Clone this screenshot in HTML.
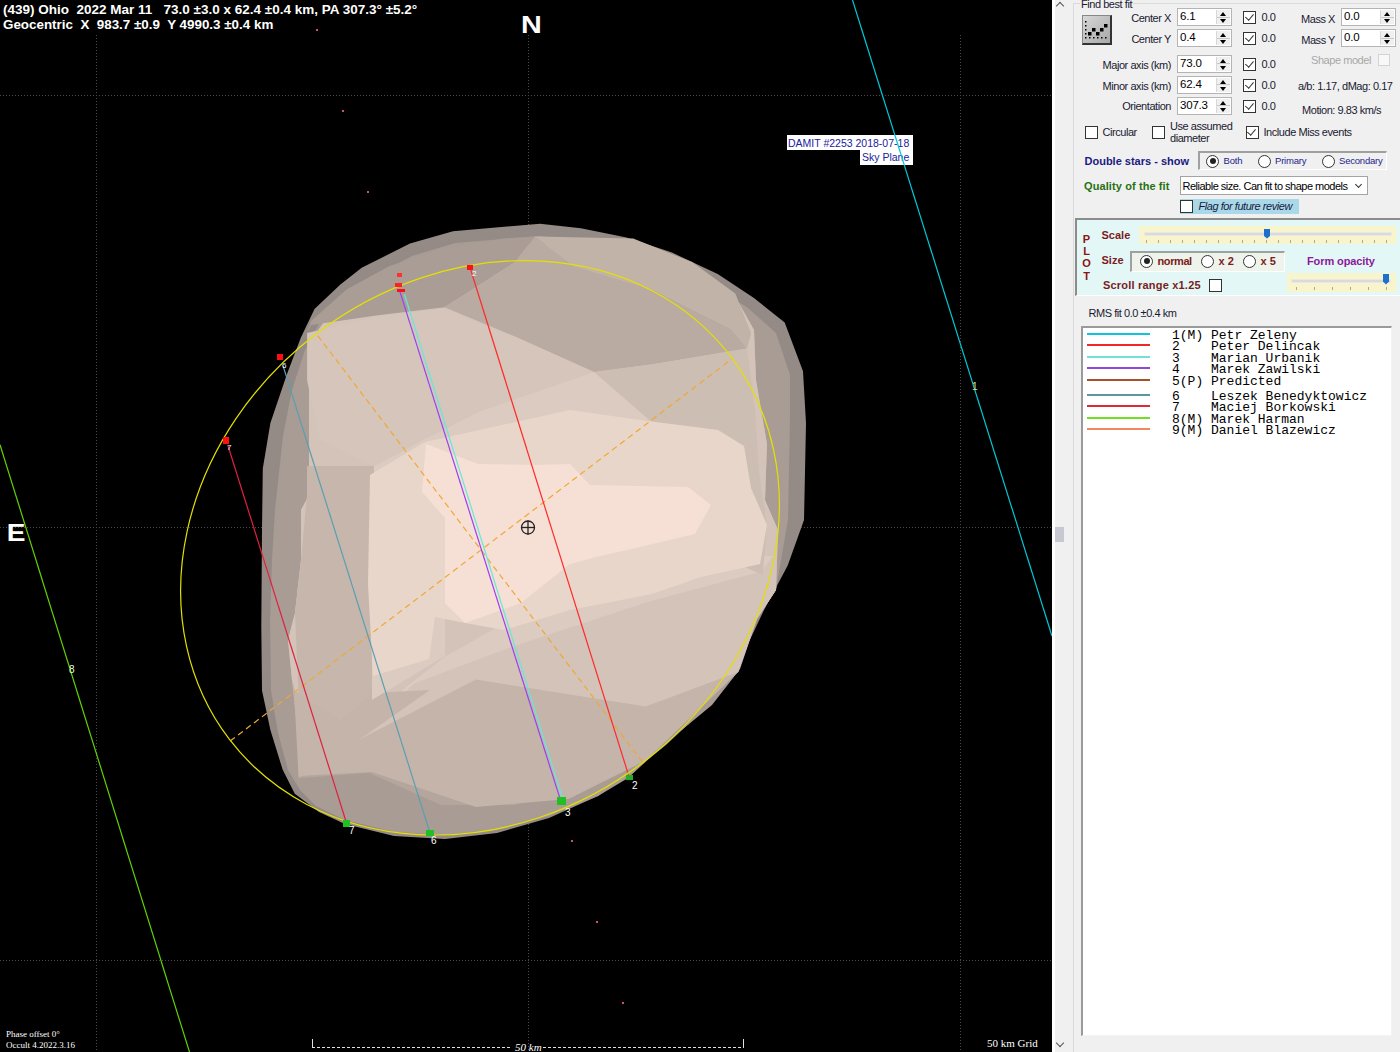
<!DOCTYPE html>
<html><head><meta charset="utf-8">
<style>
html,body{margin:0;padding:0;width:1400px;height:1052px;overflow:hidden;background:#f0f0f0;font-family:"Liberation Sans",sans-serif;}
#plot{position:absolute;left:0;top:0;width:1052px;height:1052px;background:#000;}
#strip{position:absolute;left:1052px;top:0;width:3px;height:1052px;background:#fff;}
#panel{position:absolute;left:1055px;top:0;width:345px;height:1052px;background:#f0f0f0;font-size:11px;color:#000;}
.a{position:absolute;white-space:nowrap;}
.t{position:absolute;white-space:pre;font-size:11px;letter-spacing:-0.45px;color:#000;line-height:12px;}
.r{text-align:right;}
.inp{position:absolute;width:53px;height:16px;border:1px solid #b4b4b4;background:#fff;}
.inp span{position:absolute;left:2px;top:0px;font-size:11.5px;letter-spacing:-0.2px;line-height:14px;color:#000;}
.spin{position:absolute;right:1px;top:1px;width:13px;height:14px;background:#f0f0f0;border-left:1px solid #d8d8d8;}
.spin:before{content:"";position:absolute;left:3px;top:2px;border-left:3.5px solid transparent;border-right:3.5px solid transparent;border-bottom:4px solid #000;}
.spin:after{content:"";position:absolute;left:3px;top:9px;border-left:3.5px solid transparent;border-right:3.5px solid transparent;border-top:4px solid #000;}
.spin i{position:absolute;left:0;top:6.5px;width:13px;height:1px;background:#c8c8c8;}
.cb{position:absolute;width:11px;height:11px;border:1px solid #333;background:#fff;}
.cb.k:after{content:"";position:absolute;left:2.5px;top:0px;width:3.5px;height:7px;border-right:1.3px solid #333;border-bottom:1.3px solid #333;transform:rotate(40deg);}
.rd{position:absolute;width:11px;height:11px;border:1px solid #333;border-radius:50%;background:#fff;}
.rd.k:after{content:"";position:absolute;left:2.5px;top:2.5px;width:6px;height:6px;border-radius:50%;background:#222;}
.sunk{position:absolute;border-top:2px solid #a0a0a0;border-left:2px solid #a0a0a0;border-right:1px solid #fff;border-bottom:1px solid #fff;}
.lg{position:absolute;left:1087px;width:63px;height:2px;}
.lt{position:absolute;left:1172px;font-family:"Liberation Mono",monospace;font-size:13px;line-height:13px;white-space:pre;color:#000;}

</style></head><body>
<svg id="plot" width="1052" height="1052" viewBox="0 0 1052 1052">
<rect width="1052" height="1052" fill="#000"/>
<g id="grid" stroke="#4a4a4a" stroke-width="1" stroke-dasharray="1 2">
<line x1="96.5" y1="35" x2="96.5" y2="1052"/>
<line x1="528.5" y1="35" x2="528.5" y2="1052"/>
<line x1="960.5" y1="35" x2="960.5" y2="1052"/>
<line x1="0" y1="95.5" x2="1052" y2="95.5"/>
<line x1="0" y1="527.5" x2="1052" y2="527.5"/>
<line x1="0" y1="960.5" x2="1052" y2="960.5"/>
</g>
<g id="shape">
<polygon fill="#958b86" points="262,530 262.8,468.6 270.4,423 287,374 300.8,337.8 314.5,308.9 340.4,284.5 361.7,267.8 410,243.5 453,231.3 540,223.7 580.8,228.3 626.5,237.4 672,252.6 717.7,273.9 754.3,298.2 784.7,322.6 803,371.2 806,423 804,520 787.7,565.6 763.4,611.3 739,663 714.7,699.5 666,745 635.6,769.5 598,796 549,818 497,833 445,839 394,836 345,824 319,812 294.8,793.8 282.6,769.5 270.4,730 262,690.4 261.3,626.5"/>
<polygon fill="#a89c95" points="272,560 275,510 283,436 292,390 305,350 320,322 345,297 366,280 412,256 455,243 540,236 580,240 624,249 670,265 712,285 748,308 776,333 790,375 790,420 788,519 776,590 757,619 740,669 712,705 666,743 628,778 598,796 549,816 497,830 445,835 394,832 345,820 316,806 300,790 288,770 278,733 271,690 270,620"/>
<polygon fill="#b4a69d" points="301,560 295,613 288,640 292,680 299,746 300,778 369,773 441,805 515,805 559,792 629,768 666,733 725,681 757,619 776,590 778,530 765,500 767,444 756,380 754,330 740,305 700,282 650,256 580,246 540,244 460,250 410,263 365,288 330,313 315,335 309,380 309,495 301,510"/>
<polygon fill="#c4b4a9" points="298.6,776.0 371.9,772.1 476.0,806.9 568.6,799.1 645.7,760.6 738.3,671.9 757,619 776,590 778,530 765,500 767,444 756,380 754,330 740,305 700,282 650,256 580,246 540,244 460,250 410,263 365,288 330,313 315,335 309,380 309,495 301,510 301,560 295,613 288,640 292,680 299,746"/>
<polygon fill="#d3c3b8" points="298.6,745.1 348.7,745.1 476.0,679.6 645.7,706.6 738.3,671.9 757,619 776,590 778,530 765,500 767,444 756,380 754,330 740,305 700,282 650,256 580,246 540,244 460,250 410,263 365,288 330,313 315,335 309,380 309,495 301,510 301,560 295,613 288,640 292,680 298,700"/>
<polygon fill="#dccbc0" points="348.7,745.1 371.9,714.3 445.1,656.4 506.9,621.7 645.7,583.1 761.4,556.1 773.0,556.1 761.4,571.6 645.7,602.4 506.9,648.7 414.3,683.4"/>
<polygon fill="#aa9d96" points="307.1,332.9 311.1,321.1 346.4,289.6 389.6,266.1 444.6,248.4 503.6,238.6 535.0,236.6 515.4,262.1 444.6,307.3 377.9,315.2 311.1,325.0"/>
<polygon fill="#b9aba2" points="444.6,307.3 515.4,262.1 535.0,236.6 574.3,266.1 652.9,289.6 731.4,328.9 747.1,348.6 652.9,364.3 593.9,372.1 515.4,336.8"/>
<polygon fill="#c2b3a9" points="535.0,236.6 633.2,238.6 692.1,262.1 735.3,293.6 751.1,332.9 747.1,348.6 731.4,328.9 652.9,289.6 574.3,266.1"/>
<polygon fill="#d5c5ba" points="307.1,332.9 377.9,316.4 444.6,308.5 515.4,336.8 593.9,372.1 480.0,411.4 425.0,438.9 373.9,466.4 318.9,438.9 307.1,380.0"/>
<polygon fill="#cdbeb3" points="593.9,372.1 652.9,364.3 747.1,348.6 755.0,411.4 758.9,470.4 766.8,525.4 762.8,574.9 703.9,548.9 652.9,423.2"/>
<polygon fill="#c6b6ac" points="307,466 374,466 372,693 340,720 300,730 295,613 301,560 307,495"/>
<polygon fill="#c4b4a9" points="294,690 340,720 372,693 430,690 348.7,747 298.6,778"/>
<polygon fill="#dccbc0" points="373.9,466.4 425.0,438.9 480.0,411.4 593.9,372.1 652.9,423.2 703.9,490.0 593.9,490.0 574.3,466.4 480.0,454.6 425.0,442.9 373.9,482.1"/>
<polygon fill="#dccbc0" points="372,560 445,560 445,656 400,683 372,700"/>
<polygon fill="#e9d6cb" points="370,475 425,442 570,410 640,420 718,430 744,446 751,488 767,525 760,564 701,577 652,594 570,610 504,630 465,623 435,617 429,659 373,676 368,584"/>
<polygon fill="#f6dfd5" points="426,444 478,464 537,465 570,464 590,485 688,487 711,505 695,534 636,548 596,557 570,564 537,590 521,603 465,623 445,603 445,518 422,492"/>
</g>
<g id="damit">
<rect x="787" y="135" width="126" height="15" fill="#fff"/>
<rect x="860" y="150" width="53" height="15" fill="#fff"/>
<text x="788" y="147" font-family="Liberation Sans" font-size="10.5" fill="#2020a0">DAMIT #2253 2018-07-18</text>
<text x="862" y="161" font-family="Liberation Sans" font-size="10.5" fill="#2020a0">Sky Plane</text>
</g>
<g id="lines" fill="none" stroke-width="1.2">
<line x1="852.5" y1="0" x2="1052" y2="636" stroke="#00c8d8"/>
<line x1="0" y1="444.7" x2="189.5" y2="1052" stroke="#60d400"/>
<line x1="230.1" y1="741.1" x2="731.9" y2="358.9" stroke="#f0a830" stroke-dasharray="6 4"/>
<line x1="317.7" y1="335.6" x2="644.3" y2="764.4" stroke="#f0a830" stroke-dasharray="6 4"/>
<line x1="470.8" y1="270" x2="629.6" y2="778.5" stroke="#ff2a2a"/>
<line x1="404.4" y1="294.3" x2="562.8" y2="799.3" stroke="#66e8d8"/>
<line x1="399.3" y1="289.6" x2="561.2" y2="802.4" stroke="#9a40f0"/>
<line x1="283.1" y1="366" x2="430" y2="833" stroke="#5aa0b0"/>
<line x1="228" y1="445.7" x2="346.5" y2="823" stroke="#e02040"/>
</g>
<ellipse cx="480" cy="547.8" rx="315.4" ry="269.5" transform="rotate(-37.3 480 547.8)" fill="none" stroke="#e4e000" stroke-width="1.2"/>
<g id="markers">
<rect x="467" y="265" width="6" height="5" fill="#ff1010"/>
<rect x="395" y="283" width="7" height="4" fill="#ff2020"/>
<rect x="397" y="273" width="5" height="4" fill="#ff3030"/>
<rect x="397" y="289" width="8" height="3" fill="#ff1010"/>
<rect x="277" y="354" width="6" height="6" fill="#ff1010"/>
<rect x="223" y="437" width="6" height="7" fill="#ff1010"/>
<rect x="626" y="775" width="7" height="5" fill="#20b020"/>
<rect x="557" y="797" width="9" height="8" fill="#20c020"/>
<rect x="343" y="820" width="7" height="7" fill="#20c020"/>
<rect x="426" y="830" width="8" height="6" fill="#20c020"/>
</g>
<g id="stars" fill="#d04890">
<rect x="316" y="29" width="2" height="2"/>
<rect x="342" y="110" width="2" height="2"/>
<rect x="367" y="191" width="2" height="2"/>
<rect x="571" y="840" width="2" height="2"/>
<rect x="596" y="921" width="2" height="2"/>
<rect x="622" y="1002" width="2" height="2"/>
</g>
<g id="cross" stroke="#222" stroke-width="1.3" fill="none">
<circle cx="528" cy="527.5" r="6.5"/>
<line x1="521" y1="527.5" x2="535" y2="527.5"/>
<line x1="528" y1="520.5" x2="528" y2="534.5"/>
</g>
<g font-family="Liberation Sans" fill="#fff" style="white-space:pre">
<text x="3" y="13.5" font-size="13.5" font-weight="bold" xml:space="preserve">(439) Ohio  2022 Mar 11   73.0 ±3.0 x 62.4 ±0.4 km, PA 307.3° ±5.2°</text>
<text x="3" y="29" font-size="13.4" font-weight="bold" xml:space="preserve">Geocentric  X  983.7 ±0.9  Y 4990.3 ±0.4 km</text>
<text transform="translate(521 32.5) scale(1.25 1)" x="0" y="0" font-size="23" font-weight="bold">N</text>
<text transform="translate(6.7 541) scale(1.22 1)" x="0" y="0" font-size="23" font-weight="bold">E</text>
<text x="632" y="789" font-size="10">2</text>
<text x="565" y="816" font-size="10">3</text>
<text x="431" y="844" font-size="10">6</text>
<text x="349" y="834" font-size="10">7</text>
<text x="472" y="276" font-size="8">2</text>
<text x="282" y="368" font-size="8">6</text>
<text x="227" y="450" font-size="8">7</text>
<text x="972" y="390" font-size="10" fill="#e8e080">1</text>
<text x="69" y="673" font-size="10" fill="#e0ffd0">8</text>
</g>
<g font-family="Liberation Serif" fill="#fff" font-size="9">
<text x="6" y="1037">Phase offset 0°</text>
<text x="6" y="1048">Occult 4.2022.3.16</text>
<text x="987" y="1047" font-size="11">50 km Grid</text>
<text x="515" y="1051" font-style="italic" font-size="11">50 km</text>
</g>
<g stroke="#e0e0e0" fill="none" stroke-width="1">
<path d="M312.5 1039 V1047.5"/><path d="M743.5 1039 V1047.5"/>
<path d="M312 1047.5 H512 M543 1047.5 H744" stroke-dasharray="3 2"/>
</g>
</svg>
<div id="strip"></div>
<div id="panel"></div>
<div style="position:absolute;left:1073px;top:3px;width:1px;height:1049px;background:#dadada"></div>
<div style="position:absolute;left:1073px;top:3px;width:327px;height:1px;background:#dadada"></div>
<div style="position:absolute;left:1057px;top:3px;width:5px;height:5px;border-left:1.5px solid #555;border-top:1.5px solid #555;transform:rotate(45deg);"></div>
<div style="position:absolute;left:1057px;top:1040px;width:5px;height:5px;border-right:1.5px solid #555;border-bottom:1.5px solid #555;transform:rotate(45deg);"></div>
<div style="position:absolute;left:1055px;top:527px;width:9px;height:15px;background:#c8c8d2"></div>
<div class="t" style="left:1080px;top:-2.5px;background:#f0f0f0;padding:0 1px;color:#1a1a30">Find best fit</div>
<div style="position:absolute;left:1082px;top:15px;width:27px;height:27px;border:1px solid #888;border-right:2px solid #333;border-bottom:2px solid #333;background:linear-gradient(135deg,#d8d8d8,#a8a8a8);"></div>
<svg style="position:absolute;left:1082px;top:15px" width="30" height="30" fill="#000">
<g><rect x="3" y="6" width="1.5" height="1.5"/><rect x="3" y="10" width="1.5" height="1.5"/><rect x="3" y="14" width="1.5" height="1.5"/><rect x="3" y="18" width="1.5" height="1.5"/><rect x="3" y="22" width="1.5" height="1.5"/>
<rect x="7" y="22" width="1.5" height="1.5"/><rect x="11" y="22" width="1.5" height="1.5"/><rect x="15" y="22" width="1.5" height="1.5"/><rect x="19" y="22" width="1.5" height="1.5"/><rect x="23" y="22" width="1.5" height="1.5"/>
<rect x="6" y="17" width="3.5" height="3.5"/><rect x="10" y="13" width="3.5" height="3.5"/><rect x="14" y="17" width="3.5" height="3.5"/><rect x="18" y="13" width="3.5" height="3.5"/><rect x="22" y="9" width="3.5" height="3.5"/></g>
</svg>
<div class="t r" style="left:1100px;width:71px;top:12px;color:#1a1a30">Center X</div>
<div class="t r" style="left:1100px;width:71px;top:33px;color:#1a1a30">Center Y</div>
<div class="t r" style="left:1090px;width:81px;top:58.5px;color:#1a1a30">Major axis (km)</div>
<div class="t r" style="left:1090px;width:81px;top:79.5px;color:#1a1a30">Minor axis (km)</div>
<div class="t r" style="left:1090px;width:81px;top:100px;color:#1a1a30">Orientation</div>
<div class="inp" style="left:1177px;top:8px"><span>6.1</span><div class="spin"><i></i></div></div>
<div class="inp" style="left:1177px;top:29px"><span>0.4</span><div class="spin"><i></i></div></div>
<div class="inp" style="left:1177px;top:54.5px"><span>73.0</span><div class="spin"><i></i></div></div>
<div class="inp" style="left:1177px;top:75.5px"><span>62.4</span><div class="spin"><i></i></div></div>
<div class="inp" style="left:1177px;top:96.5px"><span>307.3</span><div class="spin"><i></i></div></div>
<div class="cb k" style="left:1243px;top:10.5px"></div>
<div class="cb k" style="left:1243px;top:31.5px"></div>
<div class="cb k" style="left:1243px;top:57.5px"></div>
<div class="cb k" style="left:1243px;top:78.5px"></div>
<div class="cb k" style="left:1243px;top:99.5px"></div>
<div class="t" style="left:1261.5px;top:11px;color:#1a1a30">0.0</div>
<div class="t" style="left:1261.5px;top:32px;color:#1a1a30">0.0</div>
<div class="t" style="left:1261.5px;top:58px;color:#1a1a30">0.0</div>
<div class="t" style="left:1261.5px;top:79px;color:#1a1a30">0.0</div>
<div class="t" style="left:1261.5px;top:100px;color:#1a1a30">0.0</div>
<div class="t r" style="left:1280px;width:55px;top:12.5px;color:#1a1a30">Mass X</div>
<div class="t r" style="left:1280px;width:55px;top:33.5px;color:#1a1a30">Mass Y</div>
<div class="inp" style="left:1341px;top:8px"><span>0.0</span><div class="spin"><i></i></div></div>
<div class="inp" style="left:1341px;top:29px"><span>0.0</span><div class="spin"><i></i></div></div>
<div class="t" style="left:1311px;top:54px;color:#a8a8a8">Shape model</div>
<div style="position:absolute;left:1378px;top:54px;width:10px;height:10px;border:1px solid #d4d4d4;background:#f8f8f8"></div>
<div class="t" style="left:1298px;top:80px;color:#1a1a30">a/b: 1.17, dMag: 0.17</div>
<div class="t" style="left:1302px;top:103.5px;color:#1a1a30">Motion: 9.83 km/s</div>
<div class="cb" style="left:1085px;top:125.5px"></div>
<div class="t" style="left:1102.5px;top:125.5px;color:#1a1a30">Circular</div>
<div class="cb" style="left:1152px;top:125.5px"></div>
<div class="t" style="left:1170px;top:119.5px;color:#1a1a30">Use assumed</div>
<div class="t" style="left:1170px;top:132px;color:#1a1a30">diameter</div>
<div class="cb k" style="left:1245.5px;top:125.5px"></div>
<div class="t" style="left:1263.5px;top:125.5px;color:#1a1a30">Include Miss events</div>
<div class="t" style="left:1084.5px;top:154.5px;font-weight:bold;letter-spacing:0;color:#1a1a80">Double stars - show</div>
<div class="sunk" style="left:1198px;top:151px;width:186px;height:16px;"></div>
<div class="rd k" style="left:1206px;top:154.5px"></div>
<div class="t" style="left:1223.5px;top:155px;font-size:9.5px;letter-spacing:-0.2px;color:#1e1e8c">Both</div>
<div class="rd" style="left:1258px;top:154.5px"></div>
<div class="t" style="left:1275px;top:155px;font-size:9.5px;letter-spacing:-0.2px;color:#1e1e8c">Primary</div>
<div class="rd" style="left:1321.5px;top:154.5px"></div>
<div class="t" style="left:1339px;top:155px;font-size:9.5px;letter-spacing:-0.2px;color:#1e1e8c">Secondary</div>
<div class="t" style="left:1084px;top:180px;font-weight:bold;letter-spacing:0.1px;color:#267010">Quality of the fit</div>
<div style="position:absolute;left:1179.5px;top:176px;width:186px;height:17px;border:1px solid #a4a4a4;background:#fff"></div>
<div class="t" style="left:1182.5px;top:179.5px;color:#000;letter-spacing:-0.5px">Reliable size. Can fit to shape models</div>
<div style="position:absolute;left:1356px;top:181.5px;width:4px;height:4px;border-right:1px solid #333;border-bottom:1px solid #333;transform:rotate(45deg)"></div>
<div style="position:absolute;left:1179.5px;top:198.5px;width:119px;height:15px;background:#a9d9e9"></div>
<div class="cb" style="left:1180px;top:199.5px"></div>
<div class="t" style="left:1198.5px;top:200px;font-style:italic;color:#1a1a40">Flag for future review</div>
<div style="position:absolute;left:1075px;top:218px;width:323px;height:75px;background:#e4f7f7;border-top:2px solid #8c8c8c;border-left:2px solid #8c8c8c;border-bottom:1px solid #fff;"></div>
<div class="t" style="left:1082px;top:232.5px;font-weight:bold;font-size:11px;letter-spacing:0;color:#8b1414;line-height:12.4px;white-space:pre;text-align:center;width:9px">P
L
O
T</div>
<div class="t" style="left:1101.5px;top:229px;font-weight:bold;letter-spacing:0;color:#7a1c1c">Scale</div>
<div style="position:absolute;left:1138.5px;top:226px;width:257px;height:18px;background:#f8f4cc"></div>
<div style="position:absolute;left:1143.5px;top:232px;width:246px;height:2px;background:#dadada;border:1px solid #e8e8e8"></div>
<svg style="position:absolute;left:1138px;top:226px" width="260" height="20"><g stroke="#b0a890" stroke-width="1">
<path d="M8.5 14v3M20.5 14v3M32.5 14v3M44.5 14v3M56.5 14v3M68.5 14v3M80.5 14v3M92.5 14v3M104.5 14v3M116.5 14v3M128.5 14v3M140.5 14v3M152.5 14v3M164.5 14v3M176.5 14v3M188.5 14v3M200.5 14v3M212.5 14v3M224.5 14v3M236.5 14v3M248.5 14v3"/></g>
<path d="M126 3h6v7l-3 2.5l-3-2.5z" fill="#1f6fcf"/></svg>
<div class="t" style="left:1101.5px;top:254px;font-weight:bold;letter-spacing:0;color:#7a1c1c">Size</div>
<div class="sunk" style="left:1130px;top:250.5px;width:152px;height:18px;background:#eef4ec"></div>
<div class="rd k" style="left:1140px;top:254.5px"></div>
<div class="t" style="left:1157.5px;top:254.5px;font-weight:bold;letter-spacing:-0.4px;color:#7a1c1c">normal</div>
<div class="rd" style="left:1200.5px;top:254.5px"></div>
<div class="t" style="left:1218.5px;top:254.5px;font-weight:bold;letter-spacing:0;color:#7a1c1c">x 2</div>
<div class="rd" style="left:1242.5px;top:254.5px"></div>
<div class="t" style="left:1260.5px;top:254.5px;font-weight:bold;letter-spacing:0;color:#7a1c1c">x 5</div>
<div class="t" style="left:1307px;top:254.5px;font-weight:bold;letter-spacing:-0.1px;color:#8a1a9a">Form opacity</div>
<div style="position:absolute;left:1286.5px;top:272.5px;width:109px;height:19px;background:#f8f4cc"></div>
<div style="position:absolute;left:1291px;top:278.5px;width:98px;height:2px;background:#dadada;border:1px solid #e8e8e8"></div>
<svg style="position:absolute;left:1286px;top:272px" width="112" height="20"><g stroke="#b0a890" stroke-width="1">
<path d="M10.5 15v3M28.5 15v3M46.5 15v3M64.5 15v3M82.5 15v3M100.5 15v3"/></g>
<path d="M97 2h6v7.5l-3 3l-3-3z" fill="#1f6fcf"/></svg>
<div class="t" style="left:1103px;top:279px;font-weight:bold;letter-spacing:0.2px;color:#7a1c1c">Scroll range x1.25</div>
<div class="cb" style="left:1208.5px;top:279px"></div>
<div class="t" style="left:1088.5px;top:307px;color:#1a1a30">RMS fit 0.0 ±0.4 km</div>
<div style="position:absolute;left:1081px;top:326px;width:308px;height:707px;background:#fff;border-top:2px solid #9a9a9a;border-left:2px solid #9a9a9a;border-right:1px solid #f4f4f4;border-bottom:1px solid #f4f4f4"></div>
<div class="lg" style="top:333px;background:#10c4e0"></div>
<div class="lg" style="top:344px;background:#f02828"></div>
<div class="lg" style="top:356px;background:#70e0d8"></div>
<div class="lg" style="top:367px;background:#9048d8"></div>
<div class="lg" style="top:379px;background:#a8502c"></div>
<div class="lg" style="top:394px;background:#5a98a0"></div>
<div class="lg" style="top:405px;background:#e02838"></div>
<div class="lg" style="top:417px;background:#70e020"></div>
<div class="lg" style="top:428px;background:#f08860"></div>
<div class="lt" style="top:329px">1(M) Petr Zeleny</div>
<div class="lt" style="top:340px">2    Peter Delincak</div>
<div class="lt" style="top:352px">3    Marian Urbanik</div>
<div class="lt" style="top:363px">4    Marek Zawilski</div>
<div class="lt" style="top:375px">5(P) Predicted</div>
<div class="lt" style="top:390px">6    Leszek Benedyktowicz</div>
<div class="lt" style="top:401px">7    Maciej Borkowski</div>
<div class="lt" style="top:413px">8(M) Marek Harman</div>
<div class="lt" style="top:424px">9(M) Daniel Blazewicz</div>

</body></html>
